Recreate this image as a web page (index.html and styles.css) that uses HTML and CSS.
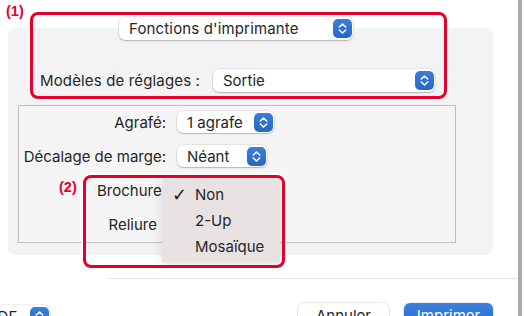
FILE: index.html
```html
<!doctype html>
<html lang="fr">
    <head>
        <meta charset="UTF-8">
        <meta name="viewport" content="width=device-width, initial-scale=1.0">
        <title>Fonctions d'imprimante</title>
        <link rel="stylesheet" href="styles.css">
    </head>
    <body>
        <div class="sheet">
            <div class="pane-head">
                <div class="popup popup-pane">
                    <span class="popup-text">Fonctions d'imprimante</span>
                    <span class="stepper">
                        <svg width="19" height="19" viewBox="0 0 19 19"><path d="M6.3 8 L9.5 5 L12.7 8 M6.3 11 L9.5 14 L12.7 11" fill="none" stroke="#fff" stroke-width="1.6" stroke-linecap="round" stroke-linejoin="round"/></svg>
                    </span>
                </div>
            </div>

            <div class="panel">
                <div class="preset-row">
                    <label class="preset-label">Modèles de réglages :</label>
                    <div class="popup popup-preset">
                        <span class="popup-text">Sortie</span>
                        <span class="stepper">
                            <svg width="19" height="19" viewBox="0 0 19 19"><path d="M6.3 8 L9.5 5 L12.7 8 M6.3 11 L9.5 14 L12.7 11" fill="none" stroke="#fff" stroke-width="1.6" stroke-linecap="round" stroke-linejoin="round"/></svg>
                        </span>
                    </div>
                </div>

                <div class="options-box">
                    <label class="opt-label">Agrafé:</label>
                    <div class="popup popup-staple">
                        <span class="popup-text">1 agrafe</span>
                        <span class="stepper">
                            <svg width="19" height="19" viewBox="0 0 19 19"><path d="M6.3 8 L9.5 5 L12.7 8 M6.3 11 L9.5 14 L12.7 11" fill="none" stroke="#fff" stroke-width="1.6" stroke-linecap="round" stroke-linejoin="round"/></svg>
                        </span>
                    </div>

                    <label class="opt-label">Décalage de marge:</label>
                    <div class="popup popup-margin">
                        <span class="popup-text">Néant</span>
                        <span class="stepper">
                            <svg width="19" height="19" viewBox="0 0 19 19"><path d="M6.3 8 L9.5 5 L12.7 8 M6.3 11 L9.5 14 L12.7 11" fill="none" stroke="#fff" stroke-width="1.6" stroke-linecap="round" stroke-linejoin="round"/></svg>
                        </span>
                    </div>

                    <label class="opt-label">Brochure:</label>
                    <div class="popup-slot"></div>

                    <label class="opt-label opt-label-short">Reliure</label>
                    <div class="popup-slot"></div>
                </div>
            </div>

            <div class="divider"></div>

            <div class="actions">
                <div class="popup popup-pdf">
                    <span class="popup-text">PDF</span>
                    <span class="stepper">
                        <svg width="19" height="19" viewBox="0 0 19 19"><path d="M6.3 8 L9.5 5 L12.7 8 M6.3 11 L9.5 14 L12.7 11" fill="none" stroke="#fff" stroke-width="1.6" stroke-linecap="round" stroke-linejoin="round"/></svg>
                    </span>
                </div>
                <div class="spacer"></div>
                <button class="btn" type="button">Annuler</button>
                <button class="btn btn-primary" type="button">Imprimer</button>
            </div>

            <!-- brochure menu, open over its popup -->
            <ul class="menu">
                <li class="menu-item"><span class="check">✓</span>Non</li>
                <li class="menu-item">2-Up</li>
                <li class="menu-item">Mosaïque</li>
            </ul>

            <!-- annotations -->
            <span class="callout callout-1">(1)</span>
            <div class="mark mark-1"></div>
            <span class="callout callout-2">(2)</span>
            <div class="mark mark-2"></div>
        </div>
    </body>
</html>
```

FILE: styles.css
```css
html, body {
    margin: 0;
    height: 316px;
    overflow: hidden;
    background: #fff;
}

body {
    font-family: Inter, "Noto Sans", sans-serif;
    font-size: 15px;
    color: #262626;
}

.sheet {
    position: relative;
    width: 522px;
    height: 316px;
    box-sizing: border-box;
    border-right: 4px solid #a9a9a9;
}

/* popup buttons */
.popup {
    display: flex;
    align-items: center;
    justify-content: space-between;
    box-sizing: border-box;
    height: 23px;
    padding: 0 1px 0 10px;
    background: #fff;
    border-radius: 6px;
    box-shadow: 0 0 0 0.5px rgba(0, 0, 0, .12), 0 1px 1.5px rgba(0, 0, 0, .22);
}

.popup-text {
    white-space: nowrap;
}

.stepper {
    display: flex;
    width: 19px;
    height: 19px;
    border-radius: 5px;
    background: linear-gradient(#3a7fdc, #2767c4);
}

.pane-head {
    position: relative;
    z-index: 1;
    padding: 17px 0 0 119px;
}

.popup-pane {
    width: 234px;
}

.popup-pane .popup-text,
.preset-label {
    letter-spacing: 0.15px;
}

.panel {
    margin: -12px 0 0 8px;
    width: 485px;
    box-sizing: border-box;
    padding: 41px 37px 12px 10px;
    background: #f3f3f3;
    border-radius: 7px;
}

.preset-row {
    display: flex;
    align-items: center;
    padding-left: 22px;
}

.preset-label {
    width: 173px;
}

.popup-preset {
    width: 222px;
}

.options-box {
    display: grid;
    grid-template-columns: 147px auto;
    grid-auto-rows: 22px;
    column-gap: 11px;
    row-gap: 12px;
    align-items: center;
    justify-items: start;
    margin-top: 13px;
    padding: 5px 0 7px;
    border: 1px solid #bdbdbd;
    background: #f5f5f5;
}

.opt-label {
    justify-self: end;
}

.opt-label-short {
    margin-right: 9px;
}

.options-box .popup {
    height: 22px;
}

.popup-staple {
    width: 97px;
}

.popup-margin {
    width: 90px;
}

.divider {
    margin: 23px 0 0 108px;
    height: 1px;
    background: #e6e6e6;
}

.actions {
    display: flex;
    align-items: flex-start;
    margin-top: 24px;
    padding-right: 25px;
}

.popup-pdf {
    width: 72px;
    margin-left: -22px;
    margin-top: 2px;
    padding-top: 2px;
    align-items: flex-start;
}

.spacer {
    flex: 1;
}

.btn {
    height: 24px;
    width: 91px;
    padding: 0;
    border: none;
    border-radius: 6px;
    font: inherit;
    color: #262626;
    background: #fff;
    box-shadow: 0 0 0 0.5px rgba(0, 0, 0, .14), 0 1px 1.5px rgba(0, 0, 0, .2);
}

.btn-primary {
    width: 89px;
    margin-left: 15px;
    color: #fff;
    background: linear-gradient(#3b80dc, #2b6fcf);
}

/* open menu */
.menu {
    position: absolute;
    left: 162px;
    top: 179px;
    width: 118px;
    margin: 0;
    padding: 3px 0 2px;
    list-style: none;
    background: #e9e2e3;
    box-shadow: 0 3px 10px rgba(0, 0, 0, .12);
}

.menu-item {
    position: relative;
    height: 26px;
    line-height: 26px;
    padding-left: 33px;
}

.check {
    position: absolute;
    left: 10px;
    top: 0;
    font-family: "DejaVu Sans", sans-serif;
    font-size: 18px;
    color: #1e1e1e;
}

/* red annotations */
.callout {
    position: absolute;
    font-family: "Liberation Sans", Arial, sans-serif;
    font-weight: bold;
    font-size: 14.5px;
    color: #e3002b;
}

.callout-1 {
    left: 6px;
    top: 3px;
}

.callout-2 {
    left: 59px;
    top: 179px;
}

.mark {
    position: absolute;
    box-sizing: border-box;
    border: 3.5px solid #e5002c;
    border-radius: 8px;
    box-shadow: 0 0 0 2px #fff;
}

.mark-1 {
    left: 30px;
    top: 12px;
    width: 417px;
    height: 87px;
}

.mark-2 {
    left: 83px;
    top: 175px;
    width: 202px;
    height: 93px;
}
```
